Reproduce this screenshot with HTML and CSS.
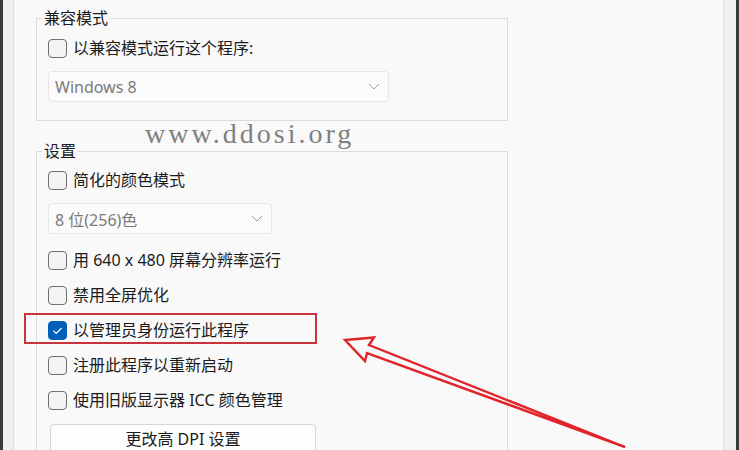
FILE: index.html
```html
<!DOCTYPE html>
<html lang="zh-CN">
<head>
  <meta charset="UTF-8">
  <title>兼容性设置</title>
  <link rel="stylesheet" href="styles.css">
</head>
<body>
  <div class="screen">
    <div class="edge edge-left"></div>

    <main class="panel">
      <fieldset class="group group-compat">
        <legend>兼容模式</legend>
        <div class="group-body">
          <label class="opt"><span class="box"></span>以兼容模式运行这个程序:</label>
          <div class="select select-wide">
            <span>Windows 8</span>
            <svg class="chevron" width="12" height="7" viewBox="0 0 12 7"><path d="M1 1 L6 6 L11 1" fill="none" stroke="#9a9a9a" stroke-width="1"/></svg>
          </div>
        </div>
      </fieldset>

      <fieldset class="group group-settings">
        <legend>设置</legend>
        <div class="group-body">
          <label class="opt"><span class="box"></span>简化的颜色模式</label>
          <div class="select select-narrow">
            <span>8 位(256)色</span>
            <svg class="chevron" width="12" height="7" viewBox="0 0 12 7"><path d="M1 1 L6 6 L11 1" fill="none" stroke="#9a9a9a" stroke-width="1"/></svg>
          </div>
          <label class="opt"><span class="box"></span>用 640 x 480 屏幕分辨率运行</label>
          <label class="opt"><span class="box"></span>禁用全屏优化</label>
          <label class="opt"><span class="box checked"><svg width="19" height="19" viewBox="0 0 19 19"><path d="M5.5 9.8 L8.2 12.4 L13.6 7" fill="none" stroke="#fff" stroke-width="1.2"/></svg></span>以管理员身份运行此程序</label>
          <label class="opt"><span class="box"></span>注册此程序以重新启动</label>
          <label class="opt"><span class="box"></span>使用旧版显示器 ICC 颜色管理</label>
          <button class="btn">更改高 DPI 设置</button>
        </div>
      </fieldset>
    </main>

    <div class="edge edge-right"></div>

    <!-- overlays from the screenshot: watermark and red annotation -->
    <div class="watermark">www.ddosi.org</div>
    <div class="mark-box"></div>
    <svg class="mark-arrow" width="739" height="450" viewBox="0 0 739 450">
      <path d="M345 340 L374 337.5 L369 345 L625 447 L367 353 L365 361 Z" fill="none" stroke="#e1242b" stroke-width="2.4" stroke-linejoin="miter"/>
    </svg>
  </div>
</body>
</html>
```

FILE: styles.css
```css
body {
  margin: 0;
  width: 739px;
  height: 450px;
  overflow: hidden;
  background: #f9f9f9;
  font-family: "Noto Sans", "Noto Sans CJK SC", sans-serif;
  font-size: 16px;
  color: #1b1b1b;
}

.screen {
  position: relative;
  display: flex;
  height: 450px;
}

.edge {
  background: #efefef;
  flex: none;
}

.edge-left {
  width: 10px;
  border-left: 3px solid #3a3a3a;
  border-right: 1px solid #dedede;
}

.edge-right {
  width: 12px;
  border-left: 1px solid #e2e2e2;
  border-right: 3px solid #3a3a3a;
}

.panel {
  flex: 1;
  padding-left: 22px;
  overflow: hidden;
  background: #f9f9f9;
}

.group {
  box-sizing: border-box;
  width: 472px;
  margin: 0;
  padding: 0 11px 16px 11px;
  border: 1px solid #dcdcdc;
}

.group legend {
  margin-left: -6px;
  padding: 0 2px;
  line-height: 20px;
}

.group-compat {
  margin-top: 8px;
}

.group-compat .group-body {
  padding-top: 9px;
}

.group-settings {
  margin-top: 20px;
  height: 400px;
}

.group-settings .group-body {
  padding-top: 8px;
}

.group-body {
  display: flex;
  flex-direction: column;
  align-items: flex-start;
  gap: 13px;
}

.opt {
  display: flex;
  align-items: center;
  gap: 6px;
  height: 22px;
  line-height: 22px;
  white-space: nowrap;
}

.box {
  box-sizing: border-box;
  width: 19px;
  height: 19px;
  border: 1px solid #6f6f6f;
  border-radius: 4px;
  background: #f4f4f4;
  flex: none;
}

.box svg {
  display: block;
  margin: -1px;
}

.box.checked {
  background: #005fb8;
  border-color: #005fb8;
}

.select {
  box-sizing: border-box;
  display: flex;
  align-items: center;
  justify-content: space-between;
  height: 31px;
  margin: -1px 0 2px 0;
  padding: 0 8px 0 6px;
  border: 1px solid #e6e6e6;
  border-radius: 4px;
  background: #fbfbfb;
  color: #7a7a7a;
}

.select-wide {
  width: 341px;
}

.select-narrow {
  width: 224px;
}

.chevron {
  display: block;
}

.btn {
  box-sizing: border-box;
  width: 266px;
  height: 30px;
  margin-left: 2px;
  padding: 0;
  border: 1px solid #d6d6d6;
  border-radius: 4px;
  background: #fdfdfd;
  font-family: inherit;
  font-size: 16px;
  line-height: 28px;
  color: #1b1b1b;
}

.watermark {
  position: absolute;
  left: 145px;
  top: 120px;
  font-family: "Liberation Serif", serif;
  font-size: 28px;
  line-height: 28px;
  letter-spacing: 3px;
  color: #7f7f7f;
}

.mark-box {
  position: absolute;
  left: 24px;
  top: 313px;
  width: 293px;
  height: 31px;
  box-sizing: border-box;
  border: 2px solid #c9333b;
}

.mark-arrow {
  position: absolute;
  left: 0;
  top: 0;
}
```
